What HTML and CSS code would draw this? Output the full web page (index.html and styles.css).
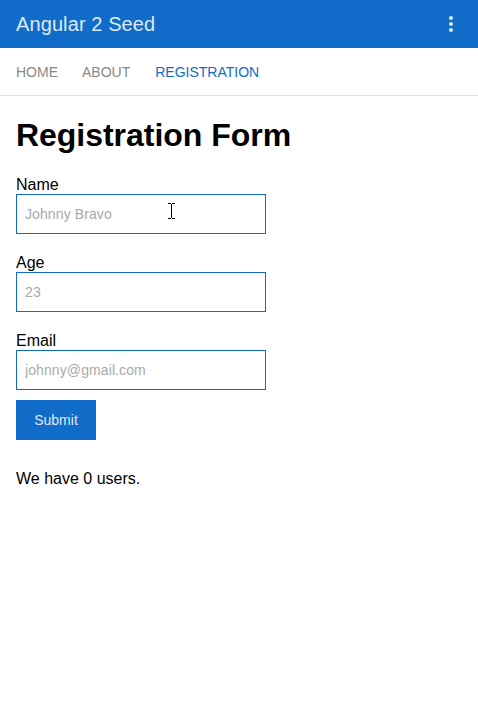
FILE: index.html
```html
<!DOCTYPE html>
<html lang="en">
<head>
<meta charset="utf-8">
<title>Angular 2 Seed</title>
<link rel="stylesheet" href="styles.css">
</head>
<body>
<header class="toolbar">
  <span class="title">Angular 2 Seed</span>
  <svg class="more" width="24" height="24" viewBox="0 0 24 24" fill="currentColor"><path d="M12 8c1.1 0 2-.9 2-2s-.9-2-2-2-2 .9-2 2 .9 2 2 2zm0 2c-1.1 0-2 .9-2 2s.9 2 2 2 2-.9 2-2-.9-2-2-2zm0 6c-1.1 0-2 .9-2 2s.9 2 2 2 2-.9 2-2-.9-2-2-2z"/></svg>
</header>
<nav class="nav">
  <a class="link">HOME</a>
  <a class="link">ABOUT</a>
  <a class="link active">REGISTRATION</a>
</nav>
<main class="content">
  <h1>Registration Form</h1>
  <form>
    <div class="field"><label for="name">Name</label>
      <div class="control"><input id="name" placeholder="Johnny Bravo">
      <svg class="cursor" width="7" height="16" viewBox="0 0 7 16" fill="none" stroke="#000" shape-rendering="crispEdges"><path d="M0 .5h3M4 .5h3M3.5 1v14M0 15.5h3M4 15.5h3"/></svg></div></div>
    <div class="field"><label for="age">Age</label><div class="control"><input id="age" placeholder="23"></div></div>
    <div class="field"><label for="email">Email</label><div class="control"><input id="email" placeholder="johnny@gmail.com"></div></div>
    <button type="button">Submit</button>
  </form>
  <p class="count">We have 0 users.</p>
</main>
</body>
</html>
```
FILE: styles.css
```css
* { box-sizing: border-box; }
body { margin: 0; background: #fff; color: #000; font: 16px/18px "Liberation Sans", Arial, sans-serif; }
.toolbar { display: flex; align-items: center; justify-content: space-between; height: 48px; padding: 0 15px 0 16px; background: #106cc8; color: rgba(255,255,255,.87); }
.title { font-size: 20px; line-height: 24px; letter-spacing: .1px; }
.nav { display: flex; align-items: center; gap: 24px; height: 48px; padding: 0 16px; border-bottom: 1px solid #e0e0e0; font-size: 14px; }
.link { color: #888; }
.active { margin-left: 1px; color: #106cc8; }
.content { padding: 21px 16px; }
h1 { margin: 0 0 23px; font-size: 32px; line-height: 36px; letter-spacing: -.03px; }
.field { margin-bottom: 20px; }
.field:last-of-type { margin-bottom: 10px; }
label { display: block; height: 18px; }
.control { position: relative; width: 250px; height: 40px; }
input { display: block; width: 250px; height: 40px; padding: 8px; border: 1px solid #106cc8; border-radius: 0; outline: 0; font: 14px "Liberation Sans", Arial, sans-serif; letter-spacing: .1px; }
input::placeholder { color: #a9a9a9; opacity: 1; }
.cursor { position: absolute; left: 152px; top: 9px; }
button { display: block; width: 80px; height: 40px; padding: 0; border: 0; background: #106cc8; color: rgba(255,255,255,.87); font: 14px "Liberation Sans", Arial, sans-serif; }
.count { margin: 30px 0 0; }
```
